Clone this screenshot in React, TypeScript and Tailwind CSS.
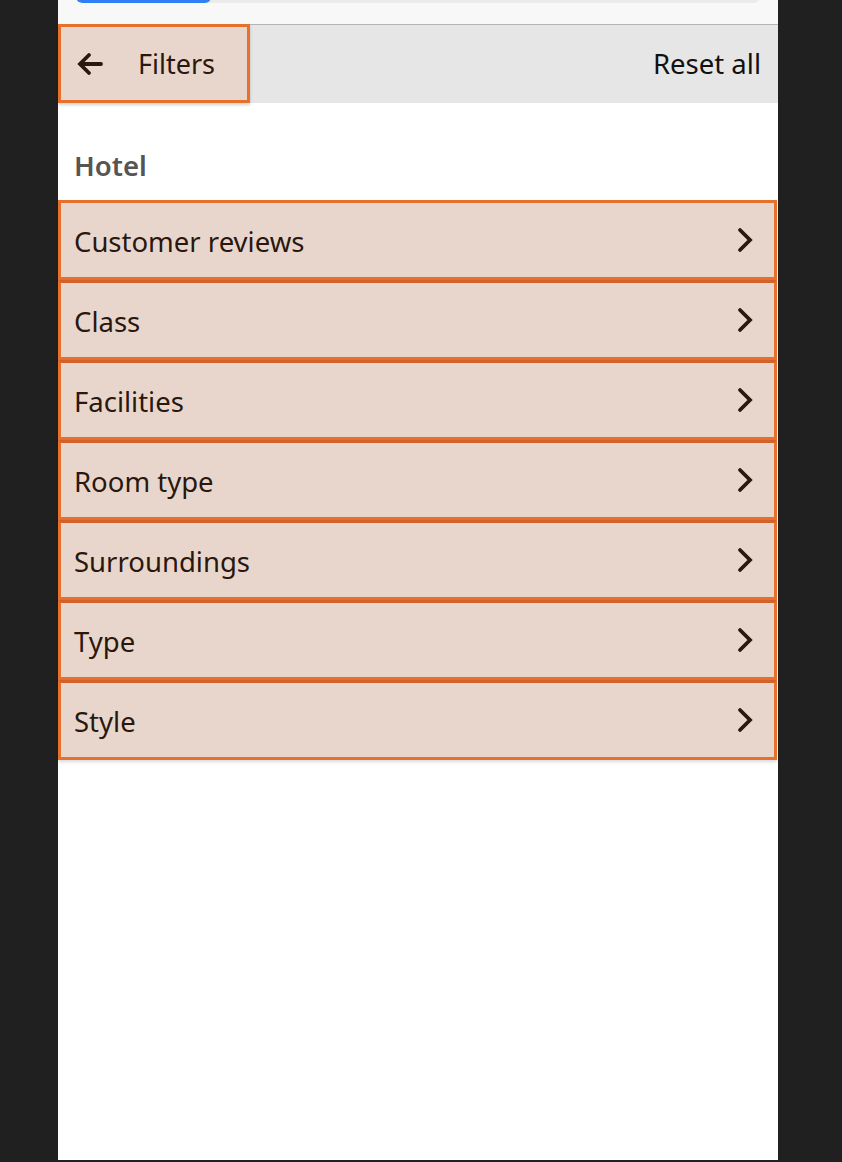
import React from "react";

const items = [
  "Customer reviews",
  "Class",
  "Facilities",
  "Room type",
  "Surroundings",
  "Type",
  "Style",
];

function Chevron() {
  return (
    <svg width="16" height="26" viewBox="0 0 16 26" className="shrink-0">
      <polyline
        points="3,3 13,13 3,23"
        fill="none"
        stroke="#2a170d"
        strokeWidth="3.8"
        strokeLinecap="round"
        strokeLinejoin="miter"
      />
    </svg>
  );
}

function ArrowLeft() {
  return (
    <svg width="26" height="24" viewBox="0 0 26 24" className="shrink-0">
      <path
        d="M24 12 H4 M12 3 L3 12 L12 21"
        fill="none"
        stroke="#2a170d"
        strokeWidth="3.8"
        strokeLinecap="round"
        strokeLinejoin="miter"
      />
    </svg>
  );
}

export default function App() {
  return (
    <div
      className="min-h-[1162px] bg-[#202020]"
      style={{ fontFamily: '"Noto Sans", "Open Sans", sans-serif' }}
    >
      <div className="ml-[58px] flex h-[1160px] w-[720px] flex-col bg-white">
        {/* top strip with progress */}
        <div className="relative h-[24px] overflow-hidden bg-[#f8f8f8]">
          <div className="absolute left-[18px] top-[-9px] h-[12px] w-[684px] overflow-hidden rounded-full bg-[#ebebeb]">
            <div className="h-full w-[135px] rounded-full bg-[#2f80f7]" />
          </div>
        </div>
        {/* header */}
        <div className="flex h-[79px] items-start justify-between border-t border-[#b5b5b5] bg-[#e6e6e6]">
          <button className="-mt-px flex h-[79px] w-[192px] items-center border-[3px] border-[#e8702d] bg-[#e8d6cc] pl-[16px] text-[27px] text-[#2a170d] shadow-[0_2px_3px_rgba(0,0,0,0.18)]">
            <ArrowLeft />
            <span className="ml-[35px] leading-none">Filters</span>
          </button>
          <div className="flex h-[78px] items-center pr-[17px] text-[27.5px] text-[#111111]">
            Reset all
          </div>
        </div>
        {/* heading */}
        <div className="flex h-[97px] items-end pb-[15px] pl-[16px] text-[27.5px] font-semibold leading-[38px] text-[#555555]">
          Hotel
        </div>
        {/* rows */}
        <div className="flex flex-col pr-px">
          {items.map((label, i) => (
            <div
              key={label}
              className={
                "flex h-[80px] items-center justify-between border-[3px] border-[#e8702d] bg-[#e8d6cc] pl-[13px] pr-[21px] text-[27.5px] text-[#2a170d] shadow-[0_2px_3px_rgba(0,0,0,0.15)] " +
                (i === 0 ? "border-t-[#e8702d]" : "border-t-[#d2622a]")
              }
            >
              <span className="pt-[3px] leading-none">{label}</span>
              <Chevron />
            </div>
          ))}
        </div>
      </div>
    </div>
  );
}
